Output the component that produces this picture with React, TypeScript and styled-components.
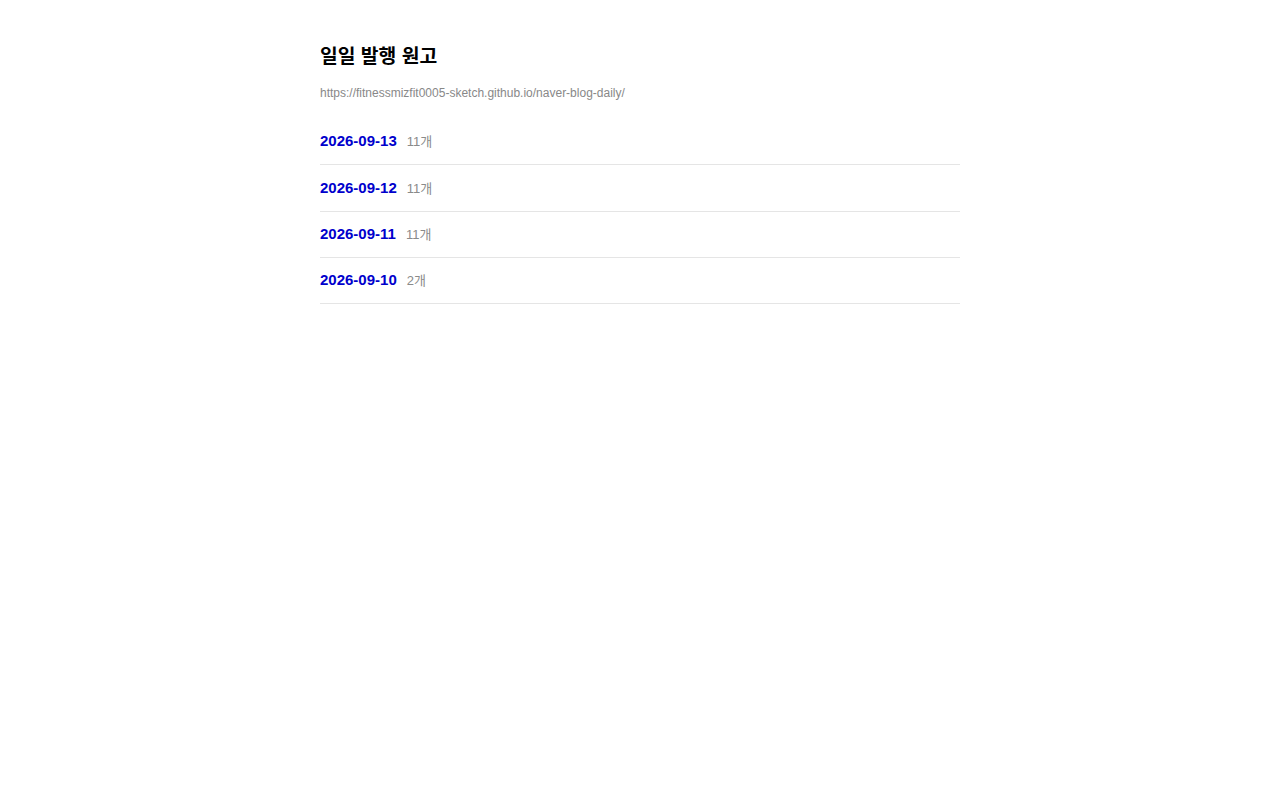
import React from "react";
import styled, { createGlobalStyle } from "styled-components";

const Global = createGlobalStyle`
  html, body { margin: 0; padding: 0; background: #fff; }
  body { font-family: "Liberation Sans", Arial, "Noto Sans CJK KR", sans-serif; color: #111; }
`;

const Page = styled.main`
  width: 640px;
  margin: 0 auto;
  padding-top: 45px;
`;

const Title = styled.h1`
  font-size: 19.3px;
  font-weight: bold;
  margin: 0;
  line-height: 24px;
  color: #000;
`;

const Url = styled.p`
  font-size: 12px;
  color: #888;
  margin: 17px 0 0;
  line-height: 14px;
`;

const List = styled.ul`
  list-style: none;
  margin: 19px 0 0;
  padding: 0;
`;

const Row = styled.li`
  display: flex;
  align-items: baseline;
  gap: 10px;
  padding: 12.2px 0 12px;
  border-bottom: 1px solid #e5e5e5;
  height: 21.13px;
`;

const DateLink = styled.a`
  font-size: 15px;
  font-weight: bold;
  color: #0000cc;
  text-decoration: none;
`;

const Count = styled.span`
  font-size: 13px;
  color: #8a8a8a;
`;

const items = [
  { date: "2026-09-13", count: "11개" },
  { date: "2026-09-12", count: "11개" },
  { date: "2026-09-11", count: "11개" },
  { date: "2026-09-10", count: "2개" },
];

export default function App() {
  return (
    <>
      <Global />
      <Page>
        <Title>일일 발행 원고</Title>
        <Url>https://fitnessmizfit0005-sketch.github.io/naver-blog-daily/</Url>
        <List>
          {items.map((it) => (
            <Row key={it.date}>
              <DateLink href="#">{it.date}</DateLink>
              <Count>{it.count}</Count>
            </Row>
          ))}
        </List>
      </Page>
    </>
  );
}
